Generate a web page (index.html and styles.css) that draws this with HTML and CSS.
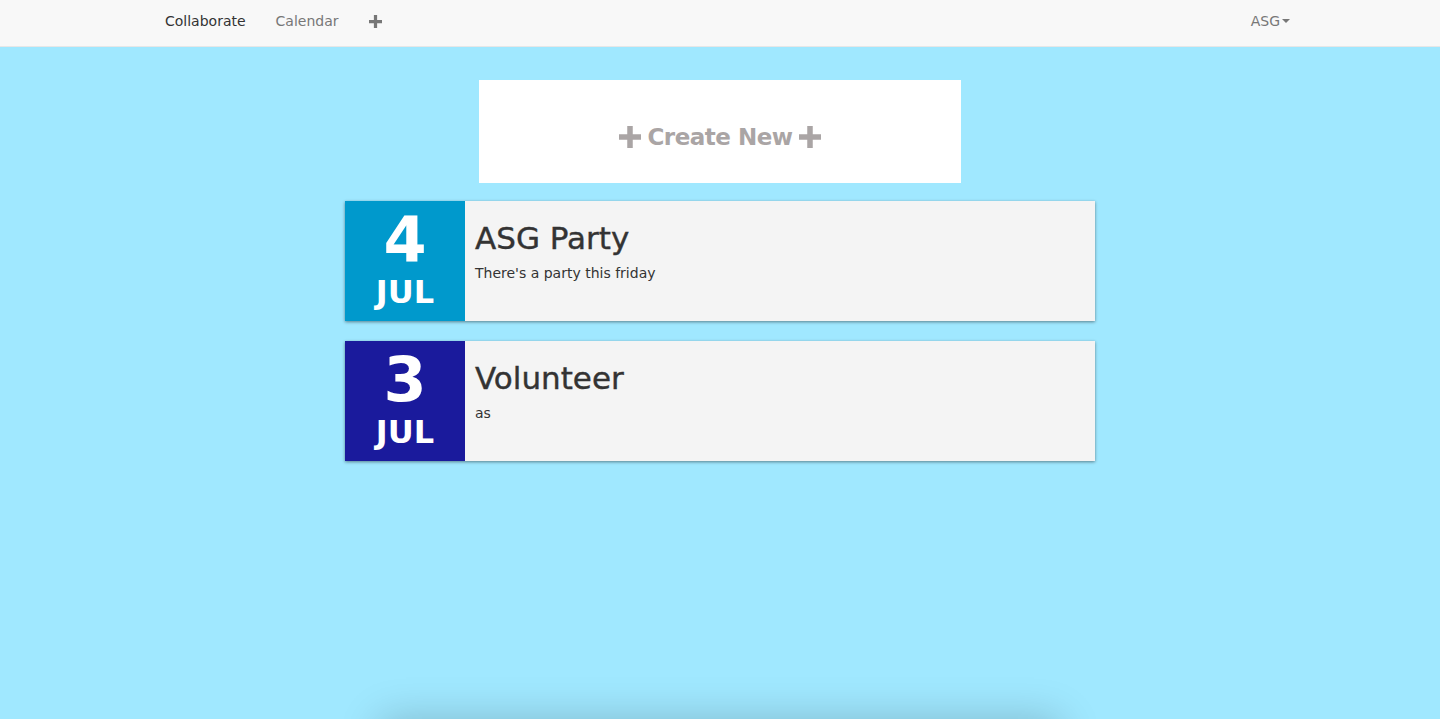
FILE: index.html
```html
<!DOCTYPE html>
<html>
<head>
<meta charset="utf-8">
<link rel="stylesheet" href="styles.css">
</head>
<body>
<nav class="navbar">
  <div class="container nav-inner">
    <ul class="nav-left">
      <li><a class="active">Collaborate</a></li>
      <li><a>Calendar</a></li>
      <li><a class="plus-link"><svg class="plus-icon" viewBox="0 0 12 12" width="13" height="13"><path d="M4.5 0h3v4.5H12v3H7.5V12h-3V7.5H0v-3h4.5z" fill="currentColor"/></svg></a></li>
    </ul>
    <ul class="nav-right">
      <li><a>ASG<span class="caret"></span></a></li>
    </ul>
  </div>
</nav>
<main class="main">
  <div class="create-box">
    <svg class="big-plus" viewBox="0 0 12 12" width="22" height="22"><path d="M4.5 0h3v4.5H12v3H7.5V12h-3V7.5H0v-3h4.5z" fill="currentColor"/></svg>
    <span class="create-text">Create New</span>
    <svg class="big-plus" viewBox="0 0 12 12" width="22" height="22"><path d="M4.5 0h3v4.5H12v3H7.5V12h-3V7.5H0v-3h4.5z" fill="currentColor"/></svg>
  </div>
  <div class="event">
    <div class="date date-light">
      <div class="day">4</div>
      <div class="month">JUL</div>
    </div>
    <div class="event-body">
      <h2 class="event-title">ASG Party</h2>
      <p class="event-desc">There's a party this friday</p>
    </div>
  </div>
  <div class="event">
    <div class="date date-dark">
      <div class="day">3</div>
      <div class="month">JUL</div>
    </div>
    <div class="event-body">
      <h2 class="event-title">Volunteer</h2>
      <p class="event-desc">as</p>
    </div>
  </div>
</main>
<div class="below-fold"></div>
</body>
</html>
```
FILE: styles.css
```css
* { box-sizing: border-box; }
html, body { margin: 0; padding: 0; }
body {
  background: #a0e8ff;
  font-family: "DejaVu Sans", "Noto Sans", sans-serif;
  color: #333;
  overflow: hidden;
}
.navbar {
  height: 47px;
  background: #f8f8f8;
  border-bottom: 1px solid #e7e7e7;
}
.container {
  width: 1170px;
  margin: 0 auto;
  padding: 0 15px;
}
.nav-inner {
  display: flex;
  justify-content: space-between;
  align-items: center;
  height: 42px;
}
.nav-left, .nav-right {
  list-style: none;
  margin: 0;
  padding: 0;
  display: flex;
  align-items: center;
}
.nav-left a, .nav-right a {
  display: flex;
  align-items: center;
  padding: 0 15px;
  font-size: 14px;
  color: #777;
  line-height: 20px;
}
.nav-left a.active { color: #333; }
.nav-left .plus-link { color: #777; padding-top: 1px; }
.nav-right a { padding-right: 0; }
.caret {
  display: inline-block;
  width: 0;
  height: 0;
  margin-left: 2px;
  border-top: 4px solid #777;
  border-left: 4px solid transparent;
  border-right: 4px solid transparent;
}
.main {
  min-height: 672px;
  display: flex;
  flex-direction: column;
  align-items: center;
  padding-top: 33px;
  margin-top: 0;
}
.navbar + .main { margin-top: 0; }
.create-box {
  width: 482px;
  height: 103px;
  background: #fff;
  display: flex;
  align-items: center;
  justify-content: center;
  gap: 6px;
  color: #aaa5a5;
  padding-top: 10px;
  margin-bottom: 18px;
}
.create-text {
  font-size: 23px;
  font-weight: bold;
  color: #aaa5a5;
  letter-spacing: -0.5px;
}
.big-plus { color: #aaa5a5; }
.event {
  width: 750px;
  height: 120px;
  display: flex;
  background: #f4f4f4;
  box-shadow: 0 1px 3px rgba(0, 0, 0, 0.45);
  margin-bottom: 20px;
}
.date {
  width: 120px;
  flex: none;
  color: #fff;
  display: flex;
  flex-direction: column;
  align-items: center;
  padding-top: 4px;
}
.date-light { background: #0099cc; }
.date-dark { background: #1a1a9c; }
.day {
  font-size: 62px;
  font-weight: bold;
  line-height: 70px;
}
.month {
  font-size: 32px;
  font-weight: bold;
  line-height: 34px;
}
.event-body {
  padding: 18px 10px 0 10px;
}
.event-title {
  margin: 0;
  font-size: 31px;
  font-weight: normal;
  line-height: 38px;
  color: #333;
  -webkit-text-stroke: 0.4px #333;
}
.event-desc {
  margin: 8px 0 0;
  font-size: 14px;
  color: #333;
}
.below-fold {
  width: 680px;
  height: 200px;
  margin: 0 auto;
  background: #a0e8ff;
  box-shadow: 0 0 40px rgba(0, 0, 0, 0.2);
}
```
